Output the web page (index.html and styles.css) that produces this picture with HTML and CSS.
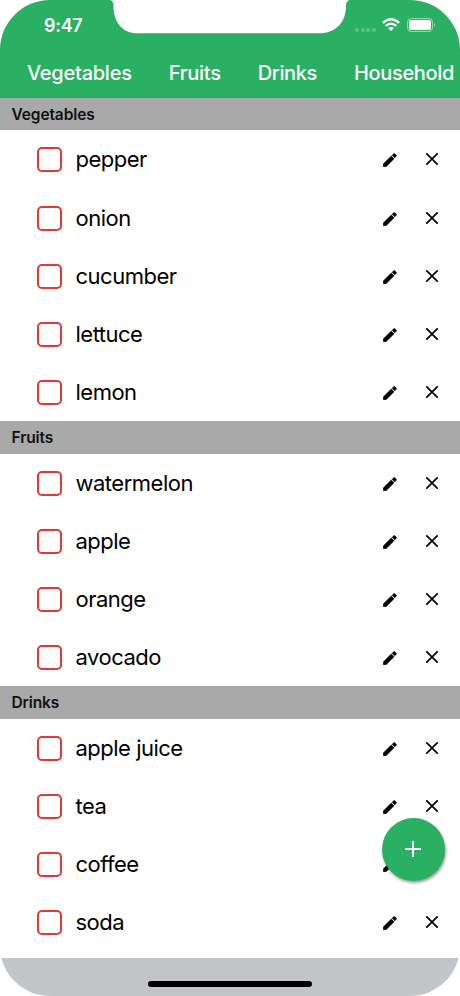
FILE: index.html
```
<!DOCTYPE html>
<html lang="en">
<head>
    <meta charset="UTF-8">
    <meta name="viewport" content="width=device-width, initial-scale=1.0">
    <title>Shopping List</title>
    <link rel="stylesheet" href="styles.css">
</head>
<body>
    <svg class="symbols" xmlns="http://www.w3.org/2000/svg">
        <symbol id="pencil" viewBox="0 0 14 14">
            <path d="M0.3 13.7V10.9L8.3 3L11 5.7L3.1 13.7ZM9.2 2.2L10.7 0.8Q11.3 0.3 11.9 0.8L13.2 2.1Q13.7 2.7 13.2 3.3L11.8 4.8Z" stroke="currentColor" stroke-width="0.6" stroke-linejoin="round"/>
        </symbol>
        <symbol id="cross" viewBox="0 0 12 12">
            <path d="M0.8 0.8L11.2 11.2M11.2 0.8L0.8 11.2" fill="none" stroke="currentColor" stroke-width="1.7" stroke-linecap="round"/>
        </symbol>
    </svg>
    <div class="phone">
        <header class="top">
            <svg class="notch" width="240" height="34" viewBox="0 0 240 34">
                <path d="M0 0Q3.5 0.5 3.5 6C3.5 22 12 33.3 28 33.3H209C226 33.3 236 22 236 6Q236 0.5 240 0Z" fill="#fff"/>
            </svg>
            <div class="status">
                <span class="time">9:47</span>
                <div class="indicators">
                    <div class="dots"><i></i><i></i><i></i><i></i></div>
                    <svg class="wifi" width="18" height="13" viewBox="0 0 18 13">
                        <path d="M0.9 4.9Q9-2.3 17.1 4.9M3.8 7.9Q9 3.4 14.2 7.9" fill="none" stroke="#fff" stroke-width="2.3"/>
                        <path d="M9 13L6.1 10.1Q9 7.9 11.9 10.1Z" fill="#fff"/>
                    </svg>
                    <svg class="battery" width="29" height="14" viewBox="0 0 29 14">
                        <rect x="0.5" y="0.5" width="25" height="13" rx="3.6" fill="none" stroke="#fff" stroke-opacity="0.5"/>
                        <rect x="2" y="2" width="22" height="10" rx="2.2" fill="#fff"/>
                        <path d="M27 4.8Q29 7 27 9.2Z" fill="#fff" fill-opacity="0.5"/>
                    </svg>
                </div>
            </div>
            <nav class="tabs">
                <span>Vegetables</span>
                <span>Fruits</span>
                <span>Drinks</span>
                <span>Household</span>
            </nav>
        </header>
        <main class="list" id="list"></main>
        <footer class="bottom">
            <div class="home-bar"></div>
        </footer>
        <button class="add" aria-label="Add">
            <svg width="18" height="18" viewBox="0 0 18 18">
                <path d="M9 1V17M1 9H17" stroke="#fff" stroke-width="2"/>
            </svg>
        </button>
    </div>

    <script>
        const sections = [
            { title: 'Vegetables', items: ['pepper', 'onion', 'cucumber', 'lettuce', 'lemon'] },
            { title: 'Fruits', items: ['watermelon', 'apple', 'orange', 'avocado'] },
            { title: 'Drinks', items: ['apple juice', 'tea', 'coffee', 'soda'] }
        ];

        function renderItem(name) {
            return `<div class="item">
                <span class="checkbox"></span>
                <span class="name">${name}</span>
                <svg class="edit"><use href="#pencil"/></svg>
                <svg class="remove"><use href="#cross"/></svg>
            </div>`;
        }

        document.getElementById('list').innerHTML = sections.map(function(section) {
            return `<h2 class="section-title">${section.title}</h2>` + section.items.map(renderItem).join('');
        }).join('');
    </script>
</body>
</html>
```
FILE: styles.css
```
* {
    box-sizing: border-box;
}
body {
    margin: 0;
    background-color: #fff;
    font-family: Inter, "Liberation Sans", sans-serif;
    color: #000;
}
.symbols {
    display: none;
}
.phone {
    position: relative;
    display: flex;
    flex-direction: column;
    width: 460px;
    height: 996px;
    overflow: hidden;
    border-radius: 50px;
    background-color: #fff;
}
.top {
    position: relative;
    flex: none;
    height: 98px;
    background-color: #29b062;
    color: #fff;
}
.notch {
    position: absolute;
    top: 0;
    left: 110px;
}
.status {
    display: flex;
    justify-content: space-between;
    height: 50px;
    padding: 15px 24px 0 44px;
}
.time {
    font-size: 18px;
    font-weight: 600;
    letter-spacing: -0.3px;
    line-height: 22px;
}
.indicators {
    display: flex;
    align-items: flex-start;
    padding-top: 3px;
}
.dots {
    display: flex;
    gap: 1.7px;
    padding-top: 10px;
    margin-right: 6px;
}
.dots i {
    width: 4px;
    height: 4px;
    border-radius: 50%;
    background-color: rgba(255, 255, 255, 0.25);
}
.battery {
    margin-left: 7px;
}
.tabs {
    display: flex;
    gap: 37px;
    padding-left: 27px;
    font-size: 20px;
    font-weight: 500;
    letter-spacing: -0.25px;
    line-height: 46px;
    white-space: nowrap;
}
.tabs span:nth-child(n+3) {
    letter-spacing: -0.35px;
}
.list {
    flex: none;
    height: 860px;
    overflow: hidden;
}
.section-title {
    height: 32.3px;
    margin: 0;
    padding-left: 11.5px;
    background-color: #a9a9a9;
    color: #111;
    font-size: 15.5px;
    font-weight: 600;
    letter-spacing: -0.12px;
    line-height: 33px;
}
.item {
    display: flex;
    align-items: center;
    height: 58.2px;
    padding: 0 22px 0 36.5px;
}
.checkbox {
    width: 25px;
    height: 25px;
    margin-top: 1px;
    border: 2px solid #df3b34;
    border-radius: 5px;
}
.name {
    flex: 1;
    margin-left: 14px;
    font-size: 22px;
    letter-spacing: -0.5px;
    line-height: 30px;
}
.edit {
    width: 14px;
    height: 14px;
    margin: 2px 29px 0 0;
}
.remove {
    width: 12px;
    height: 12px;
}
.bottom {
    flex: 1;
    background-color: #c2c6c9;
}
.home-bar {
    width: 164px;
    height: 6px;
    margin: 23px auto 0;
    border-radius: 3px;
    background-color: #000;
}
.add {
    position: absolute;
    top: 818px;
    left: 382px;
    display: flex;
    align-items: center;
    justify-content: center;
    width: 63px;
    height: 63px;
    padding: 0 1px 1px 0;
    border: none;
    border-radius: 50%;
    background-color: #29b062;
    box-shadow: 1px 2px 3px rgba(0, 0, 0, 0.4);
}
```
